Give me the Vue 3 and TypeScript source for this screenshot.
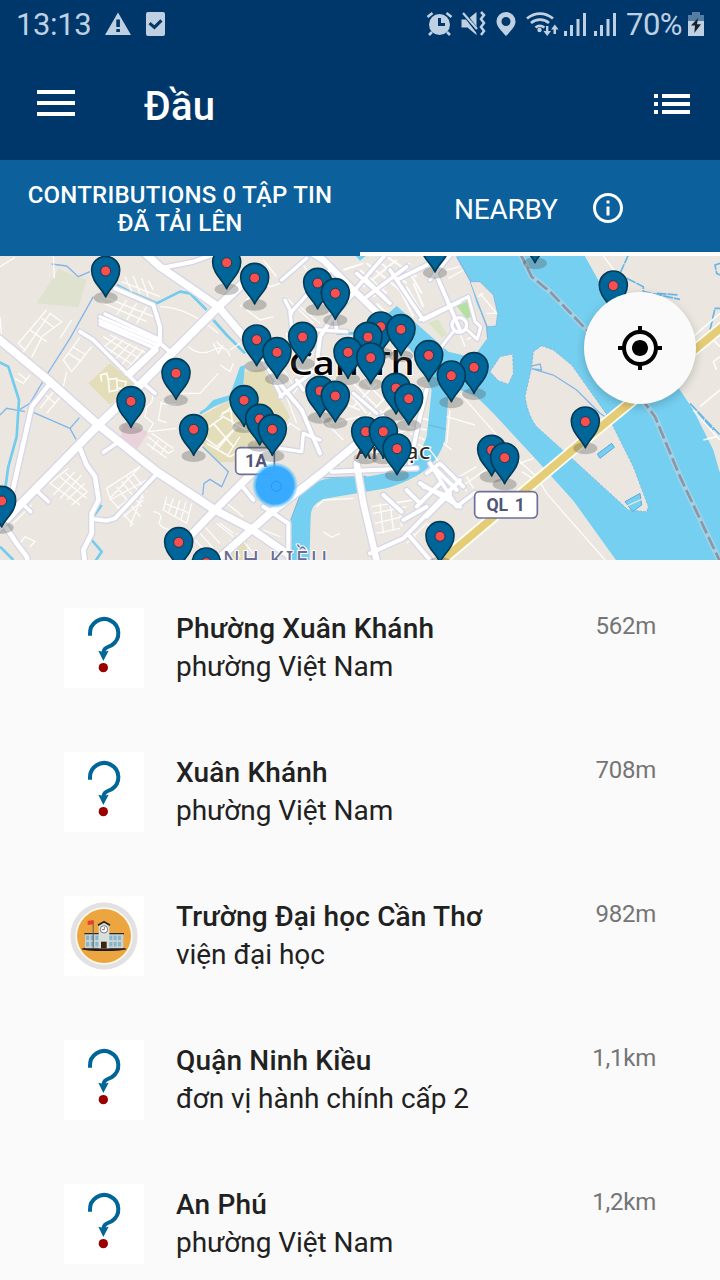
<script setup lang="ts">
interface Road { o: number; w: number; d: string }
interface Place { name: string; kind: string; distance: string; school?: boolean }

// Map artwork is drawn in three side-by-side tiles; `o` is the tile's x offset.
const A = 0
const B = 660
const C = 1320

const minor: Road[] = [
  { o: A, w: 4, d: 'M0 50L45 22M160 10L163 85M0 200L5 265M140 180L55 280L75 300L150 190L185 215L125 260M90 240L140 275M125 205L165 235M75 300L60 315M125 262L95 322M215 210L180 265M45 385L70 400L90 375M55 370L78 388M200 365L190 410M150 405L105 460M165 420L120 475M185 435L140 490M130 430L165 460' },
  { o: A, w: 4, d: 'M240 262L190 330L215 365L275 290M205 310L245 335M218 290L258 315M290 270L330 320M375 80L395 125M400 78L420 130M425 85L445 140M445 92L460 120M365 95L480 140M300 155L440 215M310 140L460 200M380 150L350 195M410 160L380 210M440 170L410 220' },
  { o: A, w: 4, d: 'M290 275L400 345M310 260L425 330M330 255L440 310M350 260L300 300M370 270L320 320M390 280L340 335M410 290L360 350M430 300L380 360M480 170Q560 170 655 250M565 290Q600 320 640 300T690 320M530 290L500 350M520 430L600 430L655 370M700 340L690 365L660 345M640 280L655 310L670 285M650 275L672 298' },
  { o: A, w: 4, d: 'M450 420Q470 450 440 470L435 500L460 520L445 545L530 535M480 460L530 465M485 455L475 510L500 518M445 560L505 610L522 600M455 550L520 595M440 580L500 625M475 570L455 600M500 585L480 615' },
  { o: A, w: 4, d: 'M205 655L150 700L240 765M225 665L160 735M245 675L180 745M255 700L200 750M262 725L215 765M180 680L260 745M195 668L262 725M40 820L95 765M60 880L75 860L105 875L90 890M460 785Q490 790 480 810T510 840' },
  { o: A, w: 4, d: 'M420 650L320 715L330 745L420 650M330 745L400 825M350 710L420 800M365 695L425 770M380 680L432 745M395 665L440 725M330 750L440 690M350 775L440 710M370 800L430 750M390 830L440 700M500 740L490 780L560 820L575 760M520 745L505 790M540 750L525 800M558 755L542 812M495 760L570 790M515 835L550 835M610 825L660 880M600 850L640 895M585 870L625 910M650 820L700 860' },
  { o: A, w: 5, d: 'M305 395L302 375L320 370L325 390M325 388L350 385L352 420L328 425Z M350 390L378 395L375 415L352 415' },
  { o: A, w: 5, d: 'M615 540L670 500L740 540M640 520L700 590M665 490L720 470L760 500M610 560L650 590L700 540L690 460M620 580L690 620L740 590M650 600L710 530' },
  { o: B, w: 4, d: 'M90 80L150 110L180 100M80 180L120 210L160 200M195 140L280 220M30 300L60 280M100 130L60 170M200 250L200 320M260 60L240 30M130 30L170 80M240 170L300 220M190 360L230 420M230 350L280 380M260 380L220 430M290 440L310 520M330 520L420 500M260 500L290 580M175 560L210 520L240 540M200 440L230 520M300 500L370 570M60 460L130 520L100 580M80 430L0 500M20 620L60 560' },
  { o: B, w: 6, d: 'M400 70L480 140M420 60L500 130M440 40L540 120M470 30L560 100M500 20L590 80M430 110L530 30M460 140L570 40M370 60L430 40M350 90L420 150M560 110L600 180M580 100L610 170M540 120L580 200M565 60L605 130M470 160L500 190' },
  { o: B, w: 5, d: 'M380 420L440 490M400 400L470 470M430 390L490 450M470 400L400 470M500 440L430 510M520 460L450 520M480 480L530 540M560 530L620 540M570 550L615 570M590 500L625 510M560 570L610 590M500 560L560 540M480 500L560 610M360 400L390 450M370 460L420 480' },
  { o: B, w: 4, d: 'M310 845L335 862L360 850M290 770L310 750L400 745M455 770L580 750M460 790L560 770M465 820L550 800M470 850L540 835M480 760L490 850M510 760L520 840M535 760L545 830M70 800L20 760M50 850L100 910M30 870L60 920M130 840L180 860M0 820L40 850M560 880L620 820L660 860M600 900L580 850M640 930L720 890' },
  { o: C, w: 4, d: 'M20 500L105 525M60 430L245 640L290 680L320 730L495 930M-30 600L60 720M40 690L110 650M50 720L150 650M60 690L80 725M80 680L100 715M10 580L35 600M30 480L20 580M240 640L280 625M245 665L300 700M490 18L530 70M120 130L170 190M140 190L172 190M115 140L130 130M20 60L60 50M25 85L70 60M80 270L95 260M60 250L75 290' },
  { o: C, w: 5, d: 'M840 190L760 260M840 320L820 335L830 360M840 420L780 470M760 480L840 570M790 570L830 560M800 250L840 290' },
]

const roads: Road[] = [
  { o: A, w: 12, d: 'M480 55L580 35L650 10M345 115L460 165L480 230L480 280L515 310M475 285L380 372M470 300L395 372' },
  { o: A, w: 11, d: 'M240 245L280 270L415 405M430 400L465 430M310 607L350 580M110 722L145 755M68 762L92 785' },
  { o: A, w: 14, d: 'M150 400L95 470L35 735L10 790M240 595L260 645L285 680L296 750L275 790L275 850L250 900L255 940M20 835L50 880L80 920L85 940' },
  { o: A, w: 12, d: 'M470 672L345 805L320 812L285 808' },
  { o: A, w: 10, d: 'M300 200L475 275M300 212L472 286M300 223L468 296M315 192L475 266' },
  { o: B, w: 10, d: 'M185 90L260 25M210 190L330 60M210 185L215 235L380 245M195 150L215 190M335 130L350 240M180 440L300 350M180 595L245 605L250 550L300 570M400 430L470 490M165 400L185 440M250 420L230 390' },
  { o: B, w: 12, d: 'M300 610L245 480L170 390L60 240M400 130L340 200L300 260L290 350M60 700L100 750M130 770L205 820L205 940M335 665L590 655' },
  { o: B, w: 11, d: 'M530 90L690 10M610 210L720 155M645 65L720 240M510 60L610 210M440 90L500 150M400 125L500 10M440 140L560 50M410 70L510 160' },
  { o: B, w: 12, d: 'M450 910L550 865L720 690M570 860L630 930M490 735L545 785M560 720L600 760M650 660L710 720M600 700L720 770M590 770L660 700M620 800L690 730M550 810L620 770M620 420L600 500L570 640' },
  { o: C, w: 9, d: 'M-60 210L85 140L105 215L122 230L112 268L82 240M0 100L45 205M-20 320L40 245M-30 90L30 18' },
  { o: C, w: 11, d: 'M-30 640L50 770L105 728M-40 670L0 640L70 710M-50 710L30 740' },
  { o: C, w: 10, d: 'M80 225A22 22 0 1 1 36 225A22 22 0 1 1 80 225' },
  { o: B, w: 19, d: 'M230 -20L310 30L400 120L510 225M410 640L430 760L472 940' },
  { o: A, w: 22, d: 'M430 5L480 50L655 170L740 270M540 890L645 780L760 665M640 940L810 790L970 665L1090 565L1150 505M645 780L750 835L860 910' },
  { o: A, w: 24, d: 'M-10 262L150 395L295 525L470 665L645 780M-20 850L60 765L295 525L420 405L655 170L740 90' },
]

const pins: [number, number][] = ([
  [A, 317, 63], [A, 680, 38], [A, 528, 370], [A, 393, 454], [A, 581, 538], [A, 5, 753], [A, 536, 877], [A, 619, 938],
  [B, 104, 84], [B, 293, 99], [B, 346, 130], [B, 645, -12], [B, 482, 230], [B, 543, 238], [B, 444, 261], [B, 248, 261],
  [B, 110, 269], [B, 171, 307], [B, 384, 307], [B, 452, 323], [B, 626, 316], [B, 694, 377], [B, 300, 423], [B, 346, 438],
  [B, 528, 414], [B, 566, 446], [B, 72, 451], [B, 119, 507], [B, 157, 538], [B, 437, 545], [B, 490, 545], [B, 531, 596],
  [B, 660, 859], [C, 520, 107], [C, 285, -40], [C, 102, 352], [C, 155, 600], [C, 194, 623], [C, 436, 515],
] as [number, number, number][])
  .map(([o, x, y]): [number, number] => [o + x, y])
  .sort((p, q) => p[1] - q[1])

const places: Place[] = [
  { name: 'Phường Xuân Khánh', kind: 'phường Việt Nam', distance: '562m' },
  { name: 'Xuân Khánh', kind: 'phường Việt Nam', distance: '708m' },
  { name: 'Trường Đại học Cần Thơ', kind: 'viện đại học', distance: '982m', school: true },
  { name: 'Quận Ninh Kiều', kind: 'đơn vị hành chính cấp 2', distance: '1,1km' },
  { name: 'An Phú', kind: 'phường Việt Nam', distance: '1,2km' },
]
const windows = [66, 80, 94, 136, 149, 162]
</script>

<template>
  <div class="screen">
    <header class="top">
      <div class="status">
        <span class="clock">13:13</span>
        <svg class="left-icons" width="62" height="48" viewBox="0 0 62 48" fill="currentColor">
          <path fill-rule="evenodd" d="M13 12.5 26 35H0ZM11.3 19.5V27h3.6v-7.500ZM11.300 29v3h3.600v-3Z" />
          <path fill-rule="evenodd" d="M43 12h15a2 2 0 0 1 2 2v20a2 2 0 0 1-2 2H43a2 2 0 0 1-2-2V14a2 2 0 0 1 2-2Zm.5 12.200 6 5.400 8-8.200-2.200-2.200-6 6-3.700-3.200Z" />
        </svg>
        <svg class="right-icons" width="192" height="48" viewBox="426 0 192 48" fill="currentColor">
          <path fill-rule="evenodd" d="M439.500 14a10.500 10.500 0 1 1 0 21 10.500 10.500 0 0 1 0-21Zm-1.500 4v8h7v-3h-4v-5Z" />
          <path d="m427.500 17 5-4M451.500 17l-5-4M432 32l-3 3M447 32l3 3" stroke="currentColor" stroke-width="2.600" />
          <path d="M461.500 19.500h6l9-7.500v23l-9-7.500h-6Z" />
          <path d="m462 11 17 22" stroke="#00376b" stroke-width="4" /><path d="m463 13 14 16" stroke="currentColor" stroke-width="2.200" />
          <path d="m481 12 3 3-3 4 3 4-3 4 3 4-3 4" fill="none" stroke="currentColor" stroke-width="2.500" />
          <path fill-rule="evenodd" d="M506 12a9.500 9.500 0 0 1 9.500 9.500c0 5-5 9.500-9.500 14.500-4.500-5-9.500-9.500-9.500-14.500A9.500 9.500 0 0 1 506 12Zm0 5a4.500 4.500 0 1 0 0 9 4.500 4.500 0 0 0 0-9Z" />
          <g fill="none" stroke="currentColor" stroke-width="2.700"><path d="M527 18.500c8-6.500 18-6.500 26 0M531 23c5-4.500 13-4.500 18 0M535.500 27.500c2.500-2 6-2 9 0" /></g>
          <circle cx="539.500" cy="30" r="2.200" />
          <path d="M546 26h2.400v5h2.600l-3.800 5-3.800-5h2.600ZM553.500 34v-4.500H551l3.800-5 3.800 5H556V34Z" />
          <path d="M564 31h3v5h-3zM570 25h3v11h-3zM576.500 19h3v17h-3zM583 13h3v23h-3zM594 31h3v5h-3zM600 25h3v11h-3zM606.500 19h3v17h-3zM613 13h3v23h-3z" />
        </svg>
        <span class="percent">70%</span>
        <svg class="battery" width="16" height="48" viewBox="0 0 16 48">
          <path d="M4 12h8v3h4v6H0v-6h4Z" fill="#557ca3" /><path d="M0 21h16v15H0Z" fill="#bed0e1" />
          <path d="M10 18 3 25.500h4L6.300 33 13 24.200H9Z" fill="#17202b" />
        </svg>
      </div>
      <div class="toolbar">
        <svg class="menu" width="38" height="27" viewBox="0 0 38 27" fill="#fff"><path d="M0 0h38v4H0zM0 11h38v4H0zM0 22h38v4H0z" /></svg>
        <h1>Đầu</h1>
        <svg class="list-icon" width="36" height="20" viewBox="0 0 36 20" fill="#fff"><path d="M0 0h4v4H0zM8 0h28v4H8zM0 8h4v4H0zM8 8h28v4H8zM0 16h4v4H0zM8 16h28v4H8z" /></svg>
      </div>
    </header>

    <nav class="tabs">
      <div class="tab contributions">CONTRIBUTIONS 0 TẬP TIN<br>ĐÃ TẢI LÊN</div>
      <div class="tab nearby">
        <span>NEARBY</span>
        <svg width="36" height="36" viewBox="0 0 24 24" fill="#fff"><path d="M11 7h2v2h-2zm0 4h2v6h-2zm1-9C6.480 2 2 6.480 2 12s4.480 10 10 10 10-4.480 10-10S17.520 2 12 2zm0 18c-4.410 0-8-3.590-8-8s3.590-8 8-8 8 3.590 8 8-3.590 8-8 8z" /></svg>
      </div>
    </nav>

    <section class="map">
      <svg class="canvas" width="720" height="304" viewBox="0 18 2160 912">
        <defs>
          <radialGradient id="here"><stop offset="0.820" stop-color="#33a9ff" stop-opacity=".97" /><stop offset="1" stop-color="#55c4f8" stop-opacity=".15" /></radialGradient>
          <g id="pin">
            <ellipse cx="0" cy="80" rx="36" ry="18" fill="#555" fill-opacity=".32" />
            <path d="M0 78C-9 54-42 34-42-2A42 42 0 0 1 42-2C42 34 9 54 0 78Z" fill="#069" stroke="#033b56" stroke-width="5" stroke-linejoin="round" />
            <circle r="15" fill="#f9504f" stroke="#293650" stroke-width="3" />
          </g>
        </defs>
        <rect y="18" width="2160" height="912" fill="#ebe7e0" />
        <path d="M175 58L260 90L235 172L110 160Z" fill="#dfe2ce" />
        <path d="M330 340L400 400L330 465L265 400ZM600 500L690 450L735 365L790 355L870 500L810 590L700 635L655 637L610 590ZM660 900L740 860L740 930H660Z" fill="#e4ddb9" />
        <path d="M370 520L445 545L412 598L363 560Z" fill="#ead2db" />
        <path d="M1285 218L1315 208L1342 255L1325 262Z" fill="#dce4c8" />
        <g fill="none" stroke="#83b6e7" stroke-width="4">
          <path d="M155 42L200 48L235 80L270 65M280 140L210 265L140 375L90 460L60 478M0 495L20 475L75 485M100 487L210 535L238 503M210 535L228 568M608 590L685 665L665 710L630 688L612 700L608 735M1010 630L1015 645L1000 650L990 655" />
        </g>
        <g fill="none" stroke="#73cbed" stroke-width="8" stroke-linejoin="round">
          <path d="M350 105L400 130L470 160L540 125L570 130L620 180M640 210L680 255L735 310M-5 335L25 350L57 450L50 560L25 650L15 720M305 765L280 800L275 870L305 905L285 935M0 890L40 930M600 490L650 460L720 430L728 350M1010 250H1080" />
        </g>
        <path d="M600 492L640 450L690 435L720 350L735 345L730 400L690 450L640 470Z" fill="#75cff0" />

        <g fill="#75cff0">
          <path d="M1060 10L1110 8L1080 32Z" />
          <path d="M1145 208L1190 168L1345 305L1400 318L1430 308L1463 263L1460 228L1430 160L1410 93L1365 10H1750L1800 100L1860 230L2040 420L2080 480L2140 600L2160 670V940H1855L1720 752L1610 630L1480 490L1430 440L1380 420L1345 440L1335 570C1310 650 1255 685 1160 715L1000 742Q932 750 932 800L928 940H872V810L900 735Q940 690 990 685L1100 680Q1220 665 1260 610L1280 560L1295 420L1250 320Z" />
        </g>
        <path d="M955 684L1100 679M872 810L900 735M1287 525L1338 538" fill="none" stroke="#679fd9" stroke-width="2" />
        <path d="M1370 20L1413 95L1460 230L1463 265" fill="none" stroke="#83b6e7" stroke-width="4" />
        <path d="M1410 95L1440 95L1480 135L1493 190L1488 228L1462 230Z" fill="#ebe7e0" stroke="#72afdf" stroke-width="2" />
        <g fill="#ebe7e0" stroke="#72afdf" stroke-width="2" stroke-dasharray="8 4">
          <path d="M1470 365L1500 320L1538 312L1540 370L1525 403L1495 392Z" />
          <path d="M1625 287L1660 300L1715 345L1825 500L1900 650L1945 770L1940 785L1885 780L1710 620L1610 530Q1585 500 1575 440L1595 350L1600 305Z" />
        </g>
        <path d="M1792 612L1835 580L1843 592L1800 625ZM1875 755L1920 730L1925 765L1898 785Z" fill="#75cff0" stroke="#5fa8dd" stroke-width="3" />
        <path d="M1880 768L1925 748" stroke="#ebe7e0" stroke-width="4" />
        <path d="M1370 168L1412 150L1425 193L1400 206Z" fill="#b4e0a0" />
        <path d="M1595 348L1620 342L1625 360L1595 356L1660 375L1730 420L1800 490L1815 500" fill="none" stroke="#83b6e7" stroke-width="4" />
        <path d="M1860 70L1885 15M1880 85L1930 110L1930 125L2040 148M1970 130L2035 135M2160 40L2145 45L2150 70L2160 75M2130 240L2145 175H2160M2070 460L2160 555M2090 490L2140 540" fill="none" stroke="#68b7e7" stroke-width="5" stroke-dasharray="30 3" />

        <g fill="none" stroke="#fff" stroke-opacity=".88">
          <path v-for="(r, i) in minor" :key="i" :d="r.d" :stroke-width="r.w" :transform="`translate(${r.o})`" />
        </g>
        <g fill="none" stroke="#d6d6e7" stroke-linecap="round" stroke-linejoin="round">
          <path v-for="(r, i) in roads" :key="i" :d="r.d" :stroke-width="r.w + 8" :transform="`translate(${r.o})`" />
        </g>
        <g fill="none" stroke="#fff" stroke-linecap="round" stroke-linejoin="round">
          <path v-for="(r, i) in roads" :key="i" :d="r.d" :stroke-width="r.w" :transform="`translate(${r.o})`" />
        </g>
        <g fill="none">
          <path d="M1558 5L1595 80L1650 125L1760 240L1920 440L1965 500L2040 680L2165 945" stroke="#b9d3e1" stroke-width="18" stroke-opacity=".6" />
          <path d="M1558 5L1595 80L1650 125L1760 240L1920 440L1965 500L2040 680L2165 945" stroke="#8d96a6" stroke-width="8" stroke-dasharray="40 12" />
          <path d="M1310 945L1740 582L2170 228" stroke="#fffef5" stroke-width="34" />
          <path d="M1310 945L1740 582L2170 228" stroke="#e5cc76" stroke-width="23" />
        </g>

        <g class="shield">
          <rect x="707" y="593" width="116" height="80" rx="14" /><text x="768" y="651" text-anchor="middle">1A</text>
          <rect x="1424" y="725" width="188" height="79" rx="14" /><text class="spaced" x="1517" y="782" text-anchor="middle">QL 1</text>
        </g>
        <text class="city" x="866" y="376" textLength="378" lengthAdjust="spacingAndGlyphs">Can Th</text>
        <text class="district" x="1067" y="628" textLength="224" lengthAdjust="spacingAndGlyphs">An Lạc</text>
        <text class="ward" x="668" y="955" textLength="314">NH KIỀU</text>
        <use v-for="([x, y], i) in pins" :key="i" href="#pin" :x="x" :y="y" />
        <circle cx="825" cy="706" r="68" fill="url(#here)" />
        <circle cx="829" cy="709" r="15" fill="none" stroke="#168fec" stroke-width="2" />
      </svg>
      <button class="locate" aria-label="Locate">
        <svg width="48" height="48" viewBox="0 0 24 24"><path d="M12 8c-2.210 0-4 1.790-4 4s1.790 4 4 4 4-1.790 4-4-1.790-4-4-4zm8.940 3c-.460-4.170-3.770-7.480-7.940-7.940V1h-2v2.060C6.830 3.520 3.520 6.830 3.060 11H1v2h2.060c.460 4.170 3.770 7.480 7.940 7.940V23h2v-2.060c4.170-.460 7.480-3.770 7.940-7.940H23v-2h-2.060zM12 19c-3.870 0-7-3.130-7-7s3.130-7 7-7 7 3.130 7 7-3.130 7-7 7z" /></svg>
      </button>
    </section>

    <main class="places">
      <article v-for="p in places" :key="p.name" class="place">
        <svg v-if="p.school" class="thumb" viewBox="0 0 240 240">
          <circle cx="120" cy="120" r="101" fill="#e2e2e2" /><circle cx="120" cy="120" r="86" fill="#fffaf0" /><circle cx="120" cy="120" r="81" fill="#eda540" />
          <ellipse cx="120" cy="159" rx="67" ry="6" fill="#251d18" />
          <path d="M63 114H178V157H63Z" fill="#cbd1d3" /><path d="M61 111H180V115H61Z" fill="#2d2926" />
          <path d="M104 89L120 78L136 89V157H104Z" fill="#d9dedf" />
          <path d="M102 88L120 77L138 88" fill="none" stroke="#282421" stroke-width="5" />
          <g fill="#81b8cf"><template v-for="x in windows" :key="x"><rect :x="x" y="119" width="9" height="13" /><rect :x="x" y="138" width="9" height="13" /></template></g>
          <path d="M111 137H128V157H111Z" fill="#3b250f" />
          <circle cx="120" cy="100" r="11" fill="#fff" stroke="#423c37" stroke-width="2" /><path d="M121 93V101H114" fill="none" stroke="#423c37" stroke-width="2" />
          <path d="M86 74H89V156H86Z" fill="#5b5d60" /><path d="M88 72L71 75V87L88 85Z" fill="#f13a2c" />
        </svg>
        <svg v-else class="thumb" viewBox="0 0 240 240">
          <path d="M78 83V77A42.500 42.500 0 1 1 144 111C130 119 118 118 118 138" fill="none" stroke="#069" stroke-width="12" />
          <path d="M103 128L118 132L134 128L118 159Z" fill="#069" /><circle cx="118" cy="179" r="14" fill="#900" />
        </svg>
        <div class="copy"><h2>{{ p.name }}</h2><p>{{ p.kind }}</p></div>
        <span class="distance">{{ p.distance }}</span>
      </article>
    </main>
  </div>
</template>

<style>
body { margin: 0; overflow: hidden; }
</style>

<style scoped>
.screen { width: 720px; height: 1280px; overflow: hidden; background: #fafafa; font-family: Roboto, "Noto Sans", sans-serif; }
.top { height: 160px; background: #00376b; color: #fff; }
.status { display: flex; height: 48px; line-height: 49px; color: #bed0e1; font-size: 31px; }
.clock { width: 90px; padding-left: 16px; box-sizing: border-box; letter-spacing: -.4px; }
.left-icons { margin-left: 15px; }
.right-icons { margin-left: 259px; }
.percent { margin-left: 8px; width: 56px; white-space: nowrap; letter-spacing: -.5px; }
.battery { margin-left: 6px; }
.toolbar { display: flex; align-items: center; height: 112px; padding: 0 30px 0 37px; box-sizing: border-box; }
.menu { margin-bottom: 1px; }
h1 { margin: 6px 0 0 69px; font-size: 40px; line-height: 48px; font-weight: 500; letter-spacing: .2px; }
.list-icon { margin-left: auto; }
.tabs { display: flex; height: 96px; background: #0c609c; color: #fff; }
.tab { display: flex; width: 360px; box-sizing: border-box; }
.contributions { display: block; padding-top: 21px; text-align: center; font-size: 24px; line-height: 28px; font-weight: 500; letter-spacing: .23px; }
.nearby { align-items: center; padding-left: 94px; border-bottom: 4px solid #fff; font-size: 28px; }
.nearby span { width: 102px; padding-top: 6px; letter-spacing: -.2px; }
.nearby svg { margin: 4px 0 0 34px; }
.map { position: relative; height: 304px; overflow: hidden; }
.canvas { display: block; }
.shield rect { fill: #fff; stroke: #6c6f99; stroke-width: 5; }
.shield text { fill: #505579; font: 700 53px Roboto, sans-serif; }
.shield .spaced { word-spacing: 7px; }
.city { fill: #000; stroke: #fff; stroke-width: 6; paint-order: stroke; font: 600 96px "Open Sans", sans-serif; }
.district { fill: #292929; stroke: #fff; stroke-width: 7; paint-order: stroke; font: 400 67px "Noto Sans", sans-serif; }
.ward { fill: #686c96; stroke: #fff; stroke-width: 6; paint-order: stroke; font: 400 68px "Noto Sans", sans-serif; }
.locate { position: absolute; left: 584px; top: 36px; display: grid; place-items: center; width: 112px; height: 112px; padding: 0; border: 0; border-radius: 50%; background: #fafafa; box-shadow: 0 3px 10px #0003; }
.places { padding-top: 16px; }
.place { display: flex; height: 144px; padding: 32px 64px; box-sizing: border-box; }
.thumb { flex: none; width: 80px; height: 80px; background: #fff; }
.copy { flex: 1; margin-left: 32px; padding-top: 2px; color: #212121; }
h2, p { margin: 0; font-size: 28px; line-height: 38px; white-space: nowrap; }
h2 { font-weight: 500; letter-spacing: .17px; }
p { font-weight: 400; letter-spacing: -.05px; }
.distance { padding-top: 4px; color: #757575; font-size: 24px; line-height: 28px; letter-spacing: -.25px; }
</style>
